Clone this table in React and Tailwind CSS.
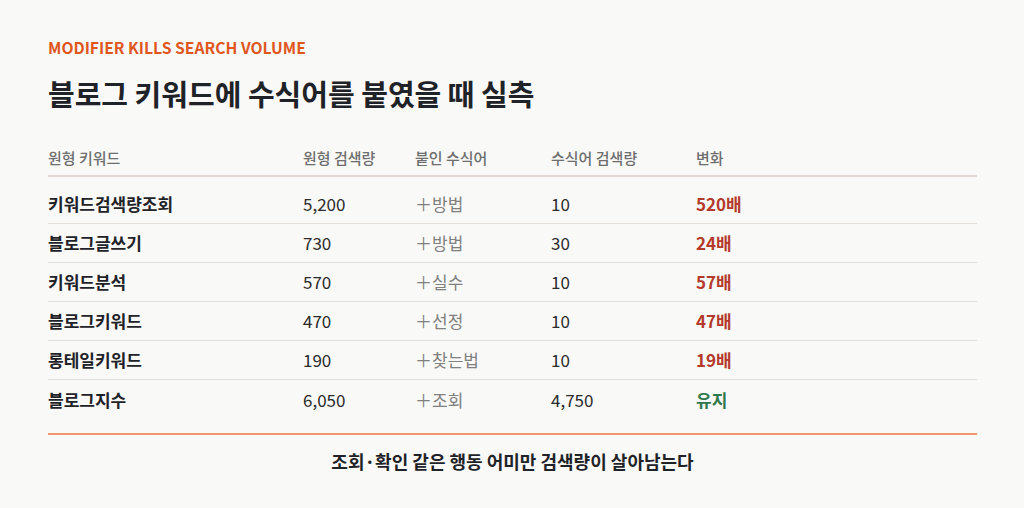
export default function App() {
  const rows = [
    ["키워드검색량조회", "5,200", "＋방법", "10", "520배", "red"],
    ["블로그글쓰기", "730", "＋방법", "30", "24배", "red"],
    ["키워드분석", "570", "＋실수", "10", "57배", "red"],
    ["블로그키워드", "470", "＋선정", "10", "47배", "red"],
    ["롱테일키워드", "190", "＋찾는법", "10", "19배", "red"],
    ["블로그지수", "6,050", "＋조회", "4,750", "유지", "green"],
  ];
  const font = { fontFamily: '"Noto Sans CJK KR", "Noto Sans", sans-serif' };
  return (
    <div className="w-[1024px] h-[508px] bg-[#f9f9f7] px-12 pt-[38px]" style={font}>
      <div className="text-[15.7px] leading-[20px] font-bold text-[#e0561c]">
        MODIFIER KILLS SEARCH VOLUME
      </div>
      <h1 className="mt-[16px] text-[29px] leading-[38px] font-bold text-[#1f2328]">
        블로그 키워드에 수식어를 붙였을 때 실측
      </h1>
      <div className="mt-[36px] w-[929px]">
        <div className="grid grid-cols-[255px_112px_136px_145px_1fr] text-[15px] leading-[20px] text-[#6e6e6e] pb-[7px] border-b-2 border-[#dedad3] font-medium">
          <div>원형 키워드</div>
          <div>원형 검색량</div>
          <div>붙인 수식어</div>
          <div>수식어 검색량</div>
          <div>변화</div>
        </div>
        <div className="pt-[8px]">
          {rows.map((r, i) => (
            <div
              key={i}
              className={
                "grid grid-cols-[255px_112px_136px_145px_1fr] items-center h-[39px] text-[17px] " +
                (i < rows.length - 1 ? "border-b border-[#e4e1dc]" : "")
              }
            >
              <div className="font-bold text-[#1f2328]">{r[0]}</div>
              <div className="text-[#2b2b2b]">{r[1]}</div>
              <div className="text-[#808080]">{r[2]}</div>
              <div className="text-[#2b2b2b]">{r[3]}</div>
              <div className={"font-bold " + (r[5] === "red" ? "text-[#b43a2c]" : "text-[#2f7a4c]")}>{r[4]}</div>
            </div>
          ))}
        </div>
        <div className="mt-[14px] border-t-2 border-[#f2956b]" />
        <div className="pt-[14px] text-center text-[18px] leading-[24px] font-bold text-[#1f2328]">
          조회·확인 같은 행동 어미만 검색량이 살아남는다
        </div>
      </div>
    </div>
  );
}
